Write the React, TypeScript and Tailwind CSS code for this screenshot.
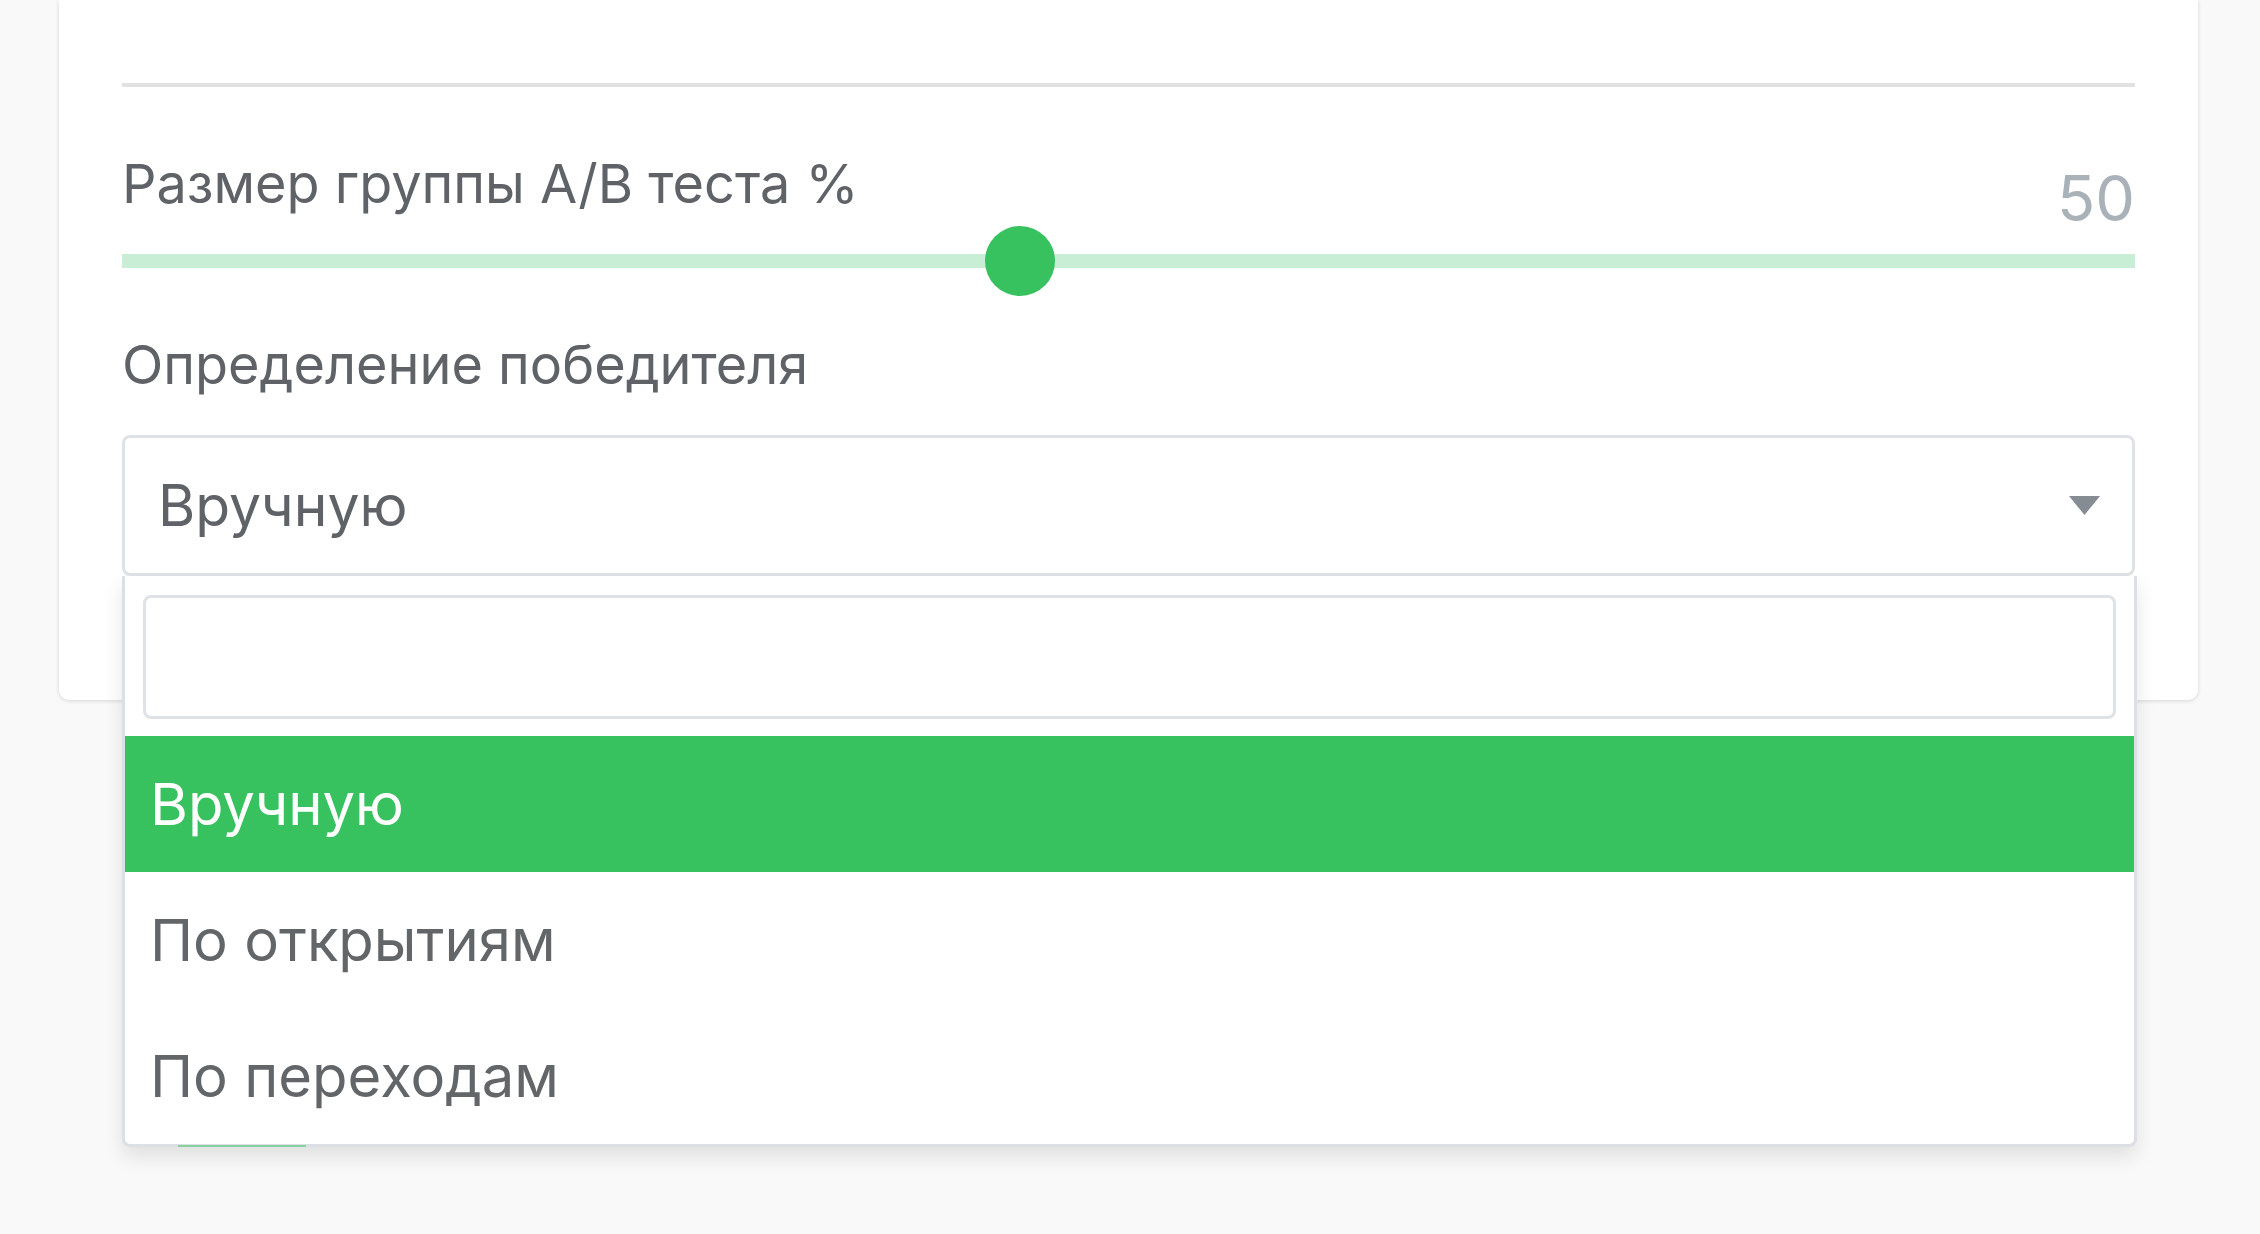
import { useState } from 'react';

const options = ['Вручную', 'По открытиям', 'По переходам'];

export default function App() {
  const [selected] = useState(0);
  const value = 50;

  return (
    <div
      className="w-[2260px] h-[1234px] overflow-hidden bg-[#f9f9f9]"
      style={{ fontFamily: 'Inter, "Noto Sans", sans-serif' }}
    >
      <div className="ml-[59px] w-[2139px] bg-white rounded-b-[10px] shadow-[0_1px_4px_rgba(0,0,0,0.14)] px-[63px] pt-[83px] pb-[124px]">
        <div className="border-t-[4px] border-[#e1e1e1]" />

        {/* A/B group size */}
        <div className="mt-[64px] flex items-start justify-between">
          <span className="text-[54px] leading-[66px] text-[#5f6367]">Размер группы A/B теста %</span>
          <span className="mt-[8px] text-[63px] leading-[78px] text-[#a9b1b9]">{value}</span>
        </div>
        <div className="relative mt-[17px] h-[14px] bg-[#c9eed6]">
          <div className="absolute top-[-28px] left-[44.6%] -ml-[35px] w-[70px] h-[70px] rounded-full bg-[#37c15f]" />
        </div>

        {/* Winner */}
        <div className="mt-[64px] text-[54px] leading-[66px] text-[#5f6367]">Определение победителя</div>
        <div className="relative mt-[37px]">
          <div className="h-[141px] flex items-center justify-between border-[3px] border-[#dfe2e6] rounded-[8px] pl-[33px] pr-[32px]">
            <span className="text-[57px] text-[#5f6367]">{options[selected]}</span>
            <svg width="31" height="19" viewBox="0 0 31 19">
              <path d="M0 0 H31 L15.5 19 Z" fill="#858c94" />
            </svg>
          </div>

          {/* Open dropdown */}
          <div className="absolute top-full left-0 right-[-2px] z-10 bg-white border-x-[3px] border-b-[3px] border-[#dcdfe3] rounded-b-[8px] shadow-[0_10px_20px_rgba(0,0,0,0.1)]">
            <div className="mt-[19px] mx-[18px] h-[124px] border-[3px] border-[#dfe2e6] rounded-[8px]" />
            <ul className="mt-[17px]">
              {options.map((o, i) => (
                <li
                  key={o}
                  className={
                    i === selected
                      ? 'h-[136px] flex items-center pl-[25px] text-[58px] bg-[#37c15f] text-white'
                      : 'h-[136px] flex items-center pl-[25px] text-[58px] text-[#636669]'
                  }
                >
                  {o}
                </li>
              ))}
            </ul>
            <div className="absolute left-[53px] bottom-[-3px] w-[128px] h-[2px] bg-[#86d3a0]" />
          </div>
        </div>
      </div>
    </div>
  );
}
